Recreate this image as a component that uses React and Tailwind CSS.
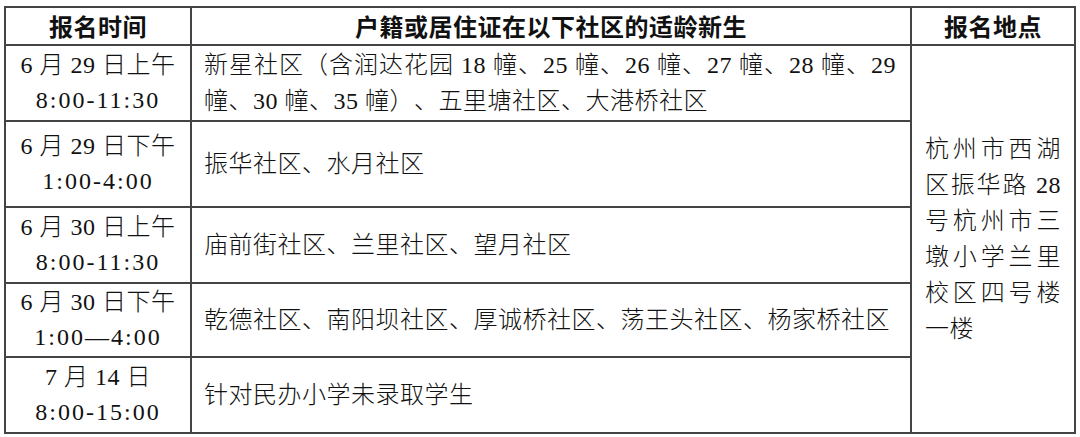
import React from "react";

const rows = [
  { d: "6 月 29 日上午", t: "8:00-11:30", c: "新星社区（含润达花园 18 幢、25 幢、26 幢、27 幢、28 幢、29 幢、30 幢、35 幢）、五里塘社区、大港桥社区", h: "h-[76px]" },
  { d: "6 月 29 日下午", t: "1:00-4:00", c: "振华社区、水月社区", h: "h-[86px]" },
  { d: "6 月 30 日上午", t: "8:00-11:30", c: "庙前街社区、兰里社区、望月社区", h: "h-[76px]" },
  { d: "6 月 30 日下午", t: "1:00—4:00", c: "乾德社区、南阳坝社区、厚诚桥社区、荡王头社区、杨家桥社区", h: "h-[74px]" },
  { d: "7 月 14 日", t: "8:00-15:00", c: "针对民办小学未录取学生", h: "h-[76px]" },
];

export default function App() {
  return (
    <div
      className="w-[1080px] h-[437px] bg-white pt-[6px] pl-[4px] text-[#111] [text-spacing-trim:space-all]"
      style={{ fontFamily: '"Liberation Serif", "Noto Sans CJK SC", serif' }}
    >
      <table className="w-[1070px] border-collapse border-2 border-[#444] table-fixed">
        <colgroup>
          <col className="w-[186px]" />
          <col className="w-[720px]" />
          <col className="w-[164px]" />
        </colgroup>
        <thead>
          <tr className="h-[38px]">
            <th className="border-2 border-[#444] text-[24px] font-bold leading-[30px] tracking-[0.5px]" style={{ fontFamily: '"Noto Sans CJK SC", sans-serif' }}>报名时间</th>
            <th className="border-2 border-[#444] text-[24px] font-bold leading-[30px] tracking-[0.5px]" style={{ fontFamily: '"Noto Sans CJK SC", sans-serif' }}>户籍或居住证在以下社区的适龄新生</th>
            <th className="border-2 border-[#444] text-[24px] font-bold leading-[30px] tracking-[0.5px]" style={{ fontFamily: '"Noto Sans CJK SC", sans-serif' }}>报名地点</th>
          </tr>
        </thead>
        <tbody>
          {rows.map((r, i) => (
            <tr key={i} className={r.h}>
              <td className="border-2 border-[#444] text-center text-[24px] leading-[35px] font-light">
                <div className="tracking-[0.5px]">{r.d}</div>
                <div className="tracking-[2px]">{r.t}</div>
              </td>
              <td className="border-2 border-[#444] pl-[12px] pr-[14px] text-[24px] leading-[36px] font-light text-justify tracking-[0.5px]">
                {r.c}
              </td>
              {i === 0 && (
                <td rowSpan={5} className="border-2 border-[#444] px-[13px] align-middle">
                  <div className="text-[24px] leading-[36px] font-light text-justify tracking-[0.5px]">
                    杭州市西湖区振华路 28号杭州市三墩小学兰里校区四号楼一楼
                  </div>
                </td>
              )}
            </tr>
          ))}
        </tbody>
      </table>
    </div>
  );
}
